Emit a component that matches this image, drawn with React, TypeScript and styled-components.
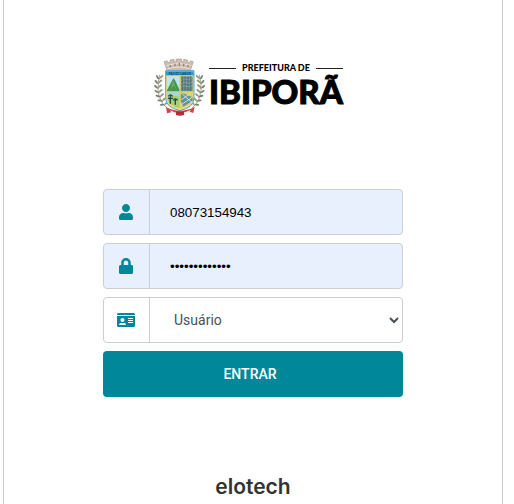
import React from "react";
import styled, { createGlobalStyle } from "styled-components";
import { FaUser, FaLock, FaIdCard } from "react-icons/fa";

const GlobalStyle = createGlobalStyle`
  *, *::before, *::after { box-sizing: border-box; }
  html, body, #root { height: 100%; }
  body {
    margin: 0;
    background: #fff;
    font-family: Roboto, "Liberation Sans", sans-serif;
  }
`;

const Page = styled.main`
  min-height: 100%;
  display: flex;
  padding: 0 11px 0 3px;
`;

const Panel = styled.section`
  flex: 1;
  max-width: 500px;
  margin: 0 auto;
  display: flex;
  flex-direction: column;
  align-items: center;
  padding-top: 58px;
  border: solid #ccc;
  border-width: 0 1px;
`;

const Brand = styled.header`
  display: flex;
  gap: 4px;
  margin: 0 10px 72px 0;
`;

const CrestArt = styled.svg`
  flex: none;
  width: 52px;
  height: 59px;
`;

const BrandText = styled.div`
  display: flex;
  flex-direction: column;
  padding-top: 4px;
  color: #000;
  font-family: Lato, sans-serif;
  font-weight: 900;
  white-space: nowrap;
`;

const BrandOver = styled.div`
  display: flex;
  align-items: center;
  gap: 6px;
  font-size: 9px;
  line-height: 12px;

  &::before, &::after {
    content: "";
    flex: 1;
    height: 1px;
    background: #222;
  }
`;

const BrandName = styled.h1`
  margin: 0;
  font-size: 33px;
  line-height: 34px;
  font-weight: 900;
  -webkit-text-stroke: 1px #000;
`;

const Form = styled.form`
  display: flex;
  flex-direction: column;
  gap: 8px;
  width: 100%;
  max-width: 300px;
`;

const Field = styled.div<{ $filled?: boolean }>`
  display: flex;
  height: 46px;
  border: 1px solid #ccced2;
  border-radius: 4px;
  overflow: hidden;
  background: ${(p) => (p.$filled ? "#e8f0fe" : "#fff")};

  &:focus-within { border-color: #008799; }
`;

const FieldIcon = styled.label<{ $wide?: boolean }>`
  display: flex;
  align-items: center;
  justify-content: center;
  width: 46px;
  padding-right: 1px;
  border-right: 1px solid #ccced2;
  color: #008799;

  svg {
    flex: none;
    width: ${(p) => (p.$wide ? 18 : 14)}px;
    height: 16px;
  }
`;

const Input = styled.input`
  flex: 1;
  min-width: 0;
  padding: 0 20px;
  border: 0;
  outline: 0;
  background: transparent;
  color: #000;
  font-family: "Liberation Sans", sans-serif;
`;

const Select = styled.select`
  flex: 1;
  min-width: 0;
  padding: 0 0 0 20px;
  border: 0;
  outline: 0;
  background: transparent;
  color: #495057;
  font-family: inherit;
  font-size: 14px;
`;

const Submit = styled.button`
  height: 46px;
  padding: 0 6px 0 0;
  border: 0;
  border-radius: 4px;
  background: #008799;
  color: #fff;
  font-family: inherit;
  font-size: 14px;
  font-weight: 500;
  cursor: pointer;
`;

const Maker = styled.footer`
  margin-top: 76px;
  color: #333;
  font-family: Inter, sans-serif;
  font-size: 21px;
  line-height: 28px;
  font-weight: 600;
`;

const leaves = [
  [54, 164, 20], [47, 152, 32], [41, 139, 45], [37, 126, 55],
  [35, 112, 65], [36, 98, 75], [39, 84, 85],
];

function Branch() {
  return (
    <g>
      <path d="M66 174Q42 156 39 120Q38 96 44 74" fill="none" stroke="#75806b" strokeWidth="2" />
      {leaves.map(([x, y, a]) => (
        <g key={y}>
          <ellipse cx={x - 3} cy={y} rx="7" ry="3" transform={`rotate(${a - 25} ${x} ${y})`} fill="#71866c" />
          <ellipse cx={x + 10} cy={y - 4} rx="7" ry="3" transform={`rotate(-38 ${x + 10} ${y - 4})`} fill="#8c9c83" />
          <circle cx={x + 5} cy={y + 2} r="2" fill="#c46a64" />
        </g>
      ))}
    </g>
  );
}

function Crest() {
  return (
    <CrestArt viewBox="24 24 156 177" role="img" aria-label="Brasão">
      <Branch />
      <g transform="translate(207 0) scale(-1 1)"><Branch /></g>
      <path d="M57 35l10-3 2 6 6-1v-7l12-2v7h6v-8h17v8h6v-7l12 2v7l6 1 2-6 9 3-9 27H66z" fill="#c9bdb5" stroke="#9d9189" strokeWidth="1.5" />
      <path d="M65 47Q100 35 138 47M68 56Q102 46 134 56" fill="none" stroke="#eee6df" strokeWidth="3" />
      <path d="M76 45v7M90 41v8M103 39v9M116 41v8M129 45v7" stroke="#90837b" strokeWidth="4" />
      <path d="M62 62H147V144Q147 172 105 182Q62 172 62 144z" fill="#eadb83" stroke="#51a8cb" strokeWidth="3" />
      <path d="M63 64H146V76H63z" fill="#289dce" />
      <text x="104.5" y="74" textAnchor="middle" fontFamily="Liberation Sans, sans-serif" fontSize="9" fontWeight="700" fill="#244b66">PAX ET LABOR</text>
      <path d="M66 79H104V124H66z" fill="#bde7ee" />
      <path d="M66 121L82 90l4-5 5 7 13 29v4H66z" fill="#499452" />
      <path d="M84 89l-7 31 9-14 9 15z" fill="#6ead61" />
      <path d="M107 79H143V124H107z" fill="#678c8b" />
      <path d="M108 92q8-8 17-4t18-5M108 101q13-7 20-2t15-5M108 112q8-7 18-3t17-4" fill="none" stroke="#a9c4b8" strokeWidth="2" />
      <path d="M112 80v41M120 80v41M129 80v43M137 80v43" stroke="#42646b" strokeWidth="2" />
      <path d="M66 127H104V175Q67 165 66 143z" fill="#a8cf74" />
      <path d="M66 127H104V141Q84 132 66 144z" fill="#a2d8e8" />
      <path d="M76 139v22M70 139q6-8 13 0M69 145h15M91 149v15M85 151q6-8 13 0" fill="none" stroke="#214b3a" strokeWidth="4" />
      <path d="M107 127H143V145Q141 164 107 175z" fill="#dfcf6c" />
      <path d="M107 127l36 15v10l-28 18-8-18z" fill="#5597b0" />
      <path d="M107 128l35 30M109 149l28-19M107 165l36-24" stroke="#ecdf93" strokeWidth="3" />
      <path d="M105 77V177M65 125H144" stroke="#e9c84d" strokeWidth="3" />
      <path d="M63 171Q104 194 149 171L145 189 129 184Q105 204 81 186L66 190z" fill="#d4444a" />
      <path d="M75 181Q104 197 137 180L133 188Q105 202 79 187z" fill="#f6f1ef" />
      <path d="M93 184Q105 188 117 184V195Q105 200 93 195z" fill="#bf2832" />
    </CrestArt>
  );
}

export default function App() {
  return (
    <>
      <GlobalStyle />
      <Page>
        <Panel>
          <Brand>
            <Crest />
            <BrandText>
              <BrandOver>PREFEITURA DE</BrandOver>
              <BrandName>IBIPORÃ</BrandName>
            </BrandText>
          </Brand>
          <Form onSubmit={(e) => e.preventDefault()}>
            <Field $filled>
              <FieldIcon htmlFor="user" aria-label="CPF"><FaUser /></FieldIcon>
              <Input id="user" type="text" defaultValue="08073154943" />
            </Field>
            <Field $filled>
              <FieldIcon htmlFor="password" aria-label="Senha"><FaLock /></FieldIcon>
              <Input id="password" type="password" defaultValue="abcdefghijklm" />
            </Field>
            <Field>
              <FieldIcon $wide htmlFor="profile" aria-label="Perfil"><FaIdCard /></FieldIcon>
              <Select id="profile" defaultValue="usuario">
                <option value="usuario">Usuário</option>
              </Select>
            </Field>
            <Submit type="submit">ENTRAR</Submit>
          </Form>
          <Maker>elotech</Maker>
        </Panel>
      </Page>
    </>
  );
}
